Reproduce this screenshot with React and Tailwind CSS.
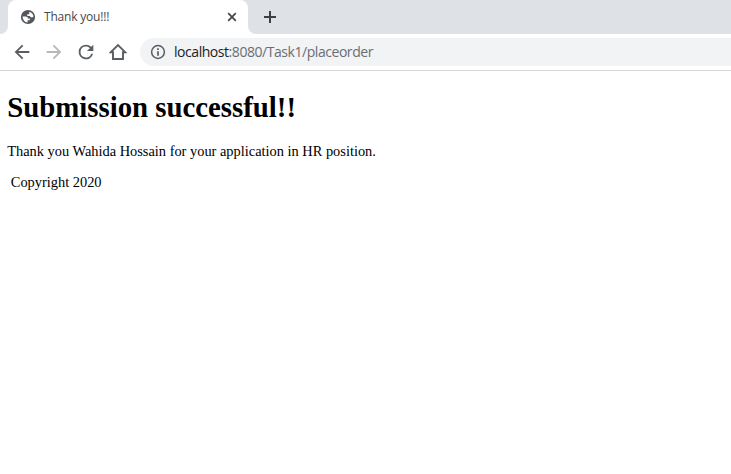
import React from "react";

function Glyph({ d, className }) {
  return (
    <svg viewBox="0 0 24 24" fill="currentColor" className={`shrink-0 ${className}`}>
      <path d={d} />
    </svg>
  );
}

function TabStrip() {
  return (
    <div className="flex h-[34px] bg-white">
      <div className="h-full w-2 rounded-br-lg bg-[#dee1e6]" />
      <div className="h-full w-60 bg-[#dee1e6]">
        <div className="flex h-full items-center rounded-t-lg bg-white pl-3 pr-[10px]">
          <svg viewBox="0 0 16 16" className="size-4 shrink-0 text-[#54585d]">
            <circle cx="8" cy="8" r="7.100" fill="currentColor" />
            <path
              d="M2.600 7.600h3.200c1.300 0 2 .8 2 1.900h2v1.700H7.600v2.300C4.900 13.500 2.700 11 2.600 7.600zM9.300 2.700c2.300.5 4 2.500 4.200 4.900-.8.8-1.600 1-2.500.7-.7-.2-.9-.7-.9-1.300H7.300V5.200h1.200c.6 0 .8-.4.800-1z"
              fill="white"
            />
          </svg>
          <span className="ml-2 whitespace-nowrap font-['Open_Sans',sans-serif] text-[12px] leading-4 tracking-[-0.2px] text-[#45494d]">
            Thank you!!!
          </span>
          <svg viewBox="0 0 12 12" className="ml-auto size-3 shrink-0 text-[#45494d]">
            <path d="m2.200 2.200 7.600 7.600m0-7.600-7.600 7.600" stroke="currentColor" strokeWidth="1.800" />
          </svg>
        </div>
      </div>
      <div className="flex h-full grow items-center rounded-bl-lg bg-[#dee1e6] pl-4">
        <svg viewBox="0 0 12 12" className="size-3 text-[#3c4043]">
          <path d="M6 0v12M0 6h12" stroke="currentColor" strokeWidth="2" />
        </svg>
      </div>
    </div>
  );
}

function Toolbar() {
  return (
    <div className="flex h-[37px] items-center border-b border-[#d5d6d8] bg-white pl-[11px] text-[#5a5d61]">
      <Glyph className="size-[22px]" d="M20 11H7.830l5.590-5.590L12 4l-8 8 8 8 1.410-1.410L7.830 13H20v-2z" />
      <Glyph className="ml-[10px] size-[22px] text-[#b5b7b9]" d="M12 4l-1.410 1.410L16.170 11H4v2h12.170l-5.580 5.590L12 20l8-8z" />
      <Glyph className="ml-[10px] size-[22px]" d="M17.650 6.350A7.958 7.958 0 0 0 12 4a8 8 0 1 0 7.730 10h-2.080A6 6 0 1 1 12 6c1.660 0 3.140.69 4.220 1.780L13 11h7V4z" />
      <svg viewBox="0 0 18 18" className="ml-3 size-[18px] shrink-0">
        <path d="M1.800 9.200 9 2l7.200 7.200H14V16H4V9.200z" fill="none" stroke="currentColor" strokeWidth="1.900" />
      </svg>
      <div className="ml-[13px] flex h-7 grow items-center rounded-l-full bg-[#f1f3f4] pl-[10px]">
        <svg viewBox="0 0 16 16" className="size-4 shrink-0">
          <circle cx="8" cy="8" r="6.400" fill="none" stroke="currentColor" strokeWidth="1.500" />
          <path d="M8 4.300v1.600M8 7.200v4.500" stroke="currentColor" strokeWidth="1.700" />
        </svg>
        <span className="ml-2 whitespace-nowrap font-['Open_Sans',sans-serif] text-[14px] leading-5 tracking-[-0.45px] text-[#6a6e73]">
          <span className="text-[#202124]">localhost</span>:8080/Task1/placeorder
        </span>
      </div>
    </div>
  );
}

export default function App() {
  return (
    <div className="h-[474px] w-full overflow-hidden bg-white">
      <TabStrip />
      <Toolbar />
      <main className="px-[7.2px] pt-5 font-['Liberation_Serif',serif] text-black">
        <h1 className="whitespace-nowrap text-[28.8px] font-bold leading-8">Submission successful!!</h1>
        <p className="mt-5 whitespace-nowrap text-[14.4px] leading-4">
          Thank you Wahida Hossain for your application in HR position.
        </p>
        <p className="mt-[15px] whitespace-pre text-[14.4px] leading-4"> Copyright 2020</p>
      </main>
    </div>
  );
}
